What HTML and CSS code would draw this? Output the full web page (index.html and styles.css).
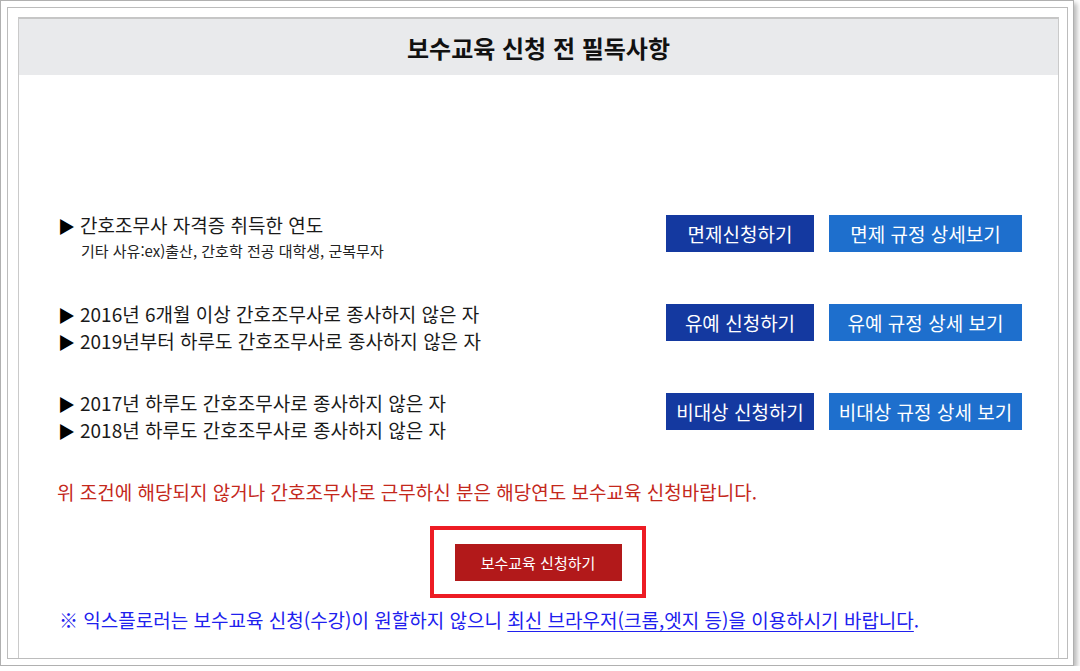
FILE: index.html
```html
<!DOCTYPE html>
<html lang="ko">
<head>
<meta charset="utf-8">
<title>보수교육 신청 전 필독사항</title>
<link rel="stylesheet" href="styles.css">
</head>
<body>
<div class="frame">
  <div class="inner">
    <div class="panel">
      <div class="panel-head">보수교육 신청 전 필독사항</div>
      <div class="panel-body">
        <div class="row row-first">
          <div class="cond">
            <p class="line"><span class="tri">▶</span>간호조무사 자격증 취득한 연도</p>
            <p class="sub">기타 사유:ex)출산, 간호학 전공 대학생, 군복무자</p>
          </div>
          <div class="btns">
            <a class="btn btn-dark">면제신청하기</a>
            <a class="btn btn-light">면제 규정 상세보기</a>
          </div>
        </div>
        <div class="row">
          <div class="cond">
            <p class="line"><span class="tri">▶</span>2016년 6개월 이상 간호조무사로 종사하지 않은 자</p>
            <p class="line"><span class="tri">▶</span>2019년부터 하루도 간호조무사로 종사하지 않은 자</p>
          </div>
          <div class="btns">
            <a class="btn btn-dark">유예 신청하기</a>
            <a class="btn btn-light">유예 규정 상세 보기</a>
          </div>
        </div>
        <div class="row">
          <div class="cond">
            <p class="line"><span class="tri">▶</span>2017년 하루도 간호조무사로 종사하지 않은 자</p>
            <p class="line"><span class="tri">▶</span>2018년 하루도 간호조무사로 종사하지 않은 자</p>
          </div>
          <div class="btns">
            <a class="btn btn-dark">비대상 신청하기</a>
            <a class="btn btn-light">비대상 규정 상세 보기</a>
          </div>
        </div>
        <p class="notice">위 조건에 해당되지 않거나 간호조무사로 근무하신 분은 해당연도 보수교육 신청바랍니다.</p>
        <div class="apply-wrap">
          <div class="apply-box"><a class="btn-apply">보수교육 신청하기</a></div>
        </div>
        <p class="browser">※ 익스플로러는 보수교육 신청(수강)이 원할하지 않으니 <u>최신 브라우저(크롬,엣지 등)을 이용하시기 바랍니다</u>.</p>
      </div>
    </div>
  </div>
</div>
</body>
</html>
```
FILE: styles.css
```css
html, body {
  margin: 0;
  padding: 0;
  background: #ffffff;
}
body {
  font-family: "Noto Sans CJK KR", "Noto Sans", sans-serif;
  color: #1a1a1a;
}
.frame {
  border: 1px solid #b0b0b0;
  padding: 6px 5px 6px 6px;
  box-sizing: border-box;
  width: 1074px;
  height: 666px;
  box-shadow: 3px 3px 5px rgba(0,0,0,0.28);
  background: #fff;
}
.inner {
  height: 652px;
  border: 1px solid #bcbcbc;
  box-sizing: border-box;
  padding: 9px 8px 0 10px;
  overflow: hidden;
}
.panel {
  border: 1px solid #cacaca;
  border-top: 2px solid #c6c6c6;
  height: 700px;
  box-sizing: border-box;
}
.panel-head {
  height: 56px;
  background: #e9eaec;
  display: flex;
  align-items: center;
  justify-content: center;
  font-size: 24px;
  font-weight: bold;
  color: #111;
}
.panel-body {
  padding: 137px 36px 0 40px;
}
.row {
  display: flex;
  height: 89px;
}
.cond {
  flex: 1;
}
.cond p {
  margin: 0;
}
.line {
  font-size: 19px;
  line-height: 26px;
  color: #1a1a1a;
}
.tri {
  display: inline-block;
  width: 22px;
  margin-left: -1px;
  font-size: 17px;
  color: #000;
}
.sub {
  font-size: 15px;
  line-height: 24px;
  padding-left: 22px;
  color: #222;
}
.btns {
  display: flex;
  gap: 15px;
  margin-top: 3px;
  align-items: flex-start;
}
.btn {
  display: flex;
  align-items: center;
  justify-content: center;
  height: 37px;
  color: #fff;
  font-size: 19px;
  white-space: nowrap;
}
.btn-dark {
  width: 148px;
  background: #1439a0;
}
.btn-light {
  width: 193px;
  background: #1e6fcd;
}
.notice {
  margin: 0 0 0 -2px;
  font-size: 19px;
  line-height: 26px;
  color: #c4281c;
}
.apply-wrap {
  display: flex;
  justify-content: center;
  margin-top: 21px;
  margin-left: -6px;
}
.apply-box {
  border: 4px solid #ed1c24;
  padding: 14px 20px 13px 21px;
}
.btn-apply {
  display: flex;
  align-items: center;
  justify-content: center;
  width: 167px;
  height: 37px;
  background: #b2191a;
  color: #fff;
  font-size: 15px;
}
.browser {
  margin: 9px 0 0 0;
  font-size: 19px;
  line-height: 26px;
  color: #2020ee;
}
.browser u {
  text-decoration-thickness: 1px;
  text-underline-offset: 3px;
}
```
